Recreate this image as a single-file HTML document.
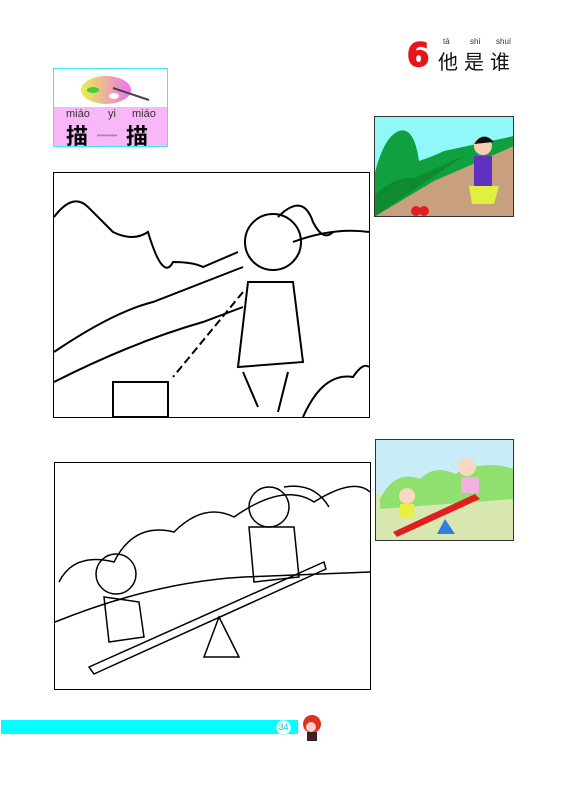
<!DOCTYPE html>
<html><head><meta charset="utf-8"><style>
body{margin:0;width:566px;height:788px;background:#fff;position:relative;overflow:hidden;font-family:"Liberation Sans","Noto Sans CJK SC",sans-serif}
.a{position:absolute}
</style></head><body>
<!-- title -->
<div class="a" style="left:407px;top:36px;font:900 32px 'DejaVu Sans',sans-serif;color:#e8141c;-webkit-text-stroke:1.5px #e8141c">6</div>
<div class="a" style="left:440px;top:37px;font-size:8px;color:#333;width:80px">
<span class="a" style="left:3px">tā</span><span class="a" style="left:30px">shì</span><span class="a" style="left:56px">shuí</span></div>
<div class="a" style="left:438px;top:46px;font:20px 'Noto Sans CJK SC',sans-serif;color:#111;letter-spacing:6px">他是谁</div>
<!-- palette box -->
<div class="a" style="left:53px;top:68px;width:113px;height:77px;border:1px solid #40e8f0;background:#fff">
<svg class="a" style="left:25px;top:5px" width="75" height="35"><defs><linearGradient id="g"><stop offset="0" stop-color="#e6f050"/><stop offset="1" stop-color="#f070f0"/></linearGradient></defs>
<ellipse cx="27" cy="16" rx="25" ry="14" fill="url(#g)"/><ellipse cx="35" cy="22" rx="5" ry="3" fill="#fff"/><ellipse cx="14" cy="16" rx="6" ry="3" fill="#40d030"/>
<line x1="34" y1="14" x2="70" y2="26" stroke="#444" stroke-width="2"/></svg>
<div class="a" style="left:0;top:38px;width:113px;height:39px;background:#f8b8f8"></div>
<div class="a" style="left:12px;top:39px;font-size:11px;color:#333;width:100px"><span class="a" style="left:0">miáo</span><span class="a" style="left:42px">yi</span><span class="a" style="left:66px">miáo</span></div>
<div class="a" style="left:12px;top:50px;font:bold 22px 'Noto Sans CJK SC',sans-serif;color:#000">描<span style="font-weight:normal;color:#b080c0;margin:0 8px">一</span>描</div>
</div>
<!-- color pic 1 -->
<svg class="a" style="left:374px;top:116px" width="140" height="101">
<rect width="140" height="101" fill="#90f8f8"/>
<path d="M0 60 Q10 20 25 15 Q40 10 45 45 Q60 40 70 35 L140 20 L140 101 L0 101Z" fill="#10a040"/>
<path d="M0 101 L60 65 L140 30 L140 101Z" fill="#c8a080"/>
<path d="M0 80 Q20 60 40 62 L90 40 L0 101Z" fill="#108a30"/>
<rect x="100" y="40" width="18" height="30" fill="#6030c0"/><path d="M95 70 L125 70 L120 88 L98 88Z" fill="#e0f040"/>
<circle cx="109" cy="30" r="9" fill="#f8d0b0"/><path d="M100 28 Q109 14 120 26" fill="#111"/>
<circle cx="42" cy="95" r="5" fill="#e02020"/><circle cx="50" cy="95" r="5" fill="#e02020"/>
<rect x="0.5" y="0.5" width="139" height="100" fill="none" stroke="#333"/></svg>
<!-- line box 1 -->
<svg class="a" style="left:53px;top:172px" width="318" height="247">
<rect x="0.5" y="0.5" width="316" height="245" fill="#fff" stroke="#000"/>
<path d="M1 45 Q20 20 35 35 Q55 55 60 60 Q80 70 95 60 Q110 110 120 90 Q140 90 150 95 L185 80" fill="none" stroke="#000" stroke-width="2"/>
<path d="M1 180 Q60 140 100 130 L190 95 M1 210 Q80 170 150 150 L190 135 M240 70 Q280 55 316 60" fill="none" stroke="#000" stroke-width="2"/>
<circle cx="220" cy="70" r="28" fill="none" stroke="#000" stroke-width="2"/>
<path d="M225 45 Q250 20 260 50 Q270 70 280 60" fill="none" stroke="#000" stroke-width="2"/>
<path d="M195 110 L240 110 L250 190 L185 195Z M190 200 L205 235 M235 200 L225 240" fill="none" stroke="#000" stroke-width="2"/>
<path d="M190 120 L120 205" stroke="#000" stroke-width="2" stroke-dasharray="8 4"/>
<rect x="60" y="210" width="55" height="35" fill="none" stroke="#000" stroke-width="2"/>
<path d="M250 245 Q270 200 300 205 Q310 190 316 195" fill="none" stroke="#000" stroke-width="2"/></svg>
<!-- color pic 2 -->
<svg class="a" style="left:375px;top:439px" width="139" height="102">
<rect width="139" height="102" fill="#c8ecf8"/><rect y="55" width="139" height="47" fill="#d8e8b0"/>
<path d="M5 60 Q20 30 45 40 Q60 25 80 35 Q110 20 139 30 L139 60 L5 70Z" fill="#90e070"/>
<path d="M18 93 L100 55 L105 60 L22 98Z" fill="#e02020"/><path d="M70 80 L62 95 L80 95Z" fill="#3080e0"/>
<circle cx="32" cy="57" r="8" fill="#f8d8c0"/><rect x="25" y="65" width="14" height="14" fill="#e8f040"/>
<circle cx="92" cy="28" r="9" fill="#f8d8c0"/><rect x="86" y="38" width="18" height="16" fill="#f0b0e0"/>
<rect x="0.5" y="0.5" width="138" height="101" fill="none" stroke="#333"/></svg>
<!-- line box 2 -->
<svg class="a" style="left:54px;top:462px" width="318" height="229">
<rect x="0.5" y="0.5" width="316" height="227" fill="#fff" stroke="#000"/>
<path d="M1 160 Q100 120 190 115 Q260 112 316 110" fill="none" stroke="#000" stroke-width="1.5"/>
<path d="M5 120 Q20 90 60 100 Q80 60 120 70 Q150 40 180 55 Q230 20 260 40 Q300 15 316 30" fill="none" stroke="#000" stroke-width="1.5"/>
<path d="M35 205 L270 100 L272 107 L40 212Z" fill="none" stroke="#000" stroke-width="1.5"/>
<path d="M165 155 L150 195 L185 195Z" fill="none" stroke="#000" stroke-width="1.5"/>
<circle cx="62" cy="112" r="20" fill="none" stroke="#000" stroke-width="1.5"/>
<circle cx="215" cy="45" r="20" fill="none" stroke="#000" stroke-width="1.5"/>
<path d="M230 25 Q260 20 275 45 M195 65 L240 65 L245 115 L200 120Z M50 135 L85 140 L90 175 L55 180Z" fill="none" stroke="#000" stroke-width="1.5"/></svg>
<!-- footer -->
<div class="a" style="left:1px;top:720px;width:297px;height:14px;background:#00ffff"></div>
<div class="a" style="left:276px;top:720px;width:13px;height:13px;border-radius:50%;background:#fff;border:1px solid #9ff;font-size:9px;line-height:13px;text-align:center;color:#0cc">34</div>
<svg class="a" style="left:300px;top:714px" width="26" height="30"><circle cx="12" cy="10" r="9" fill="#e03020"/><circle cx="11" cy="13" r="5" fill="#f8d0d0"/><rect x="7" y="18" width="10" height="9" fill="#402020"/></svg>
</body></html>
